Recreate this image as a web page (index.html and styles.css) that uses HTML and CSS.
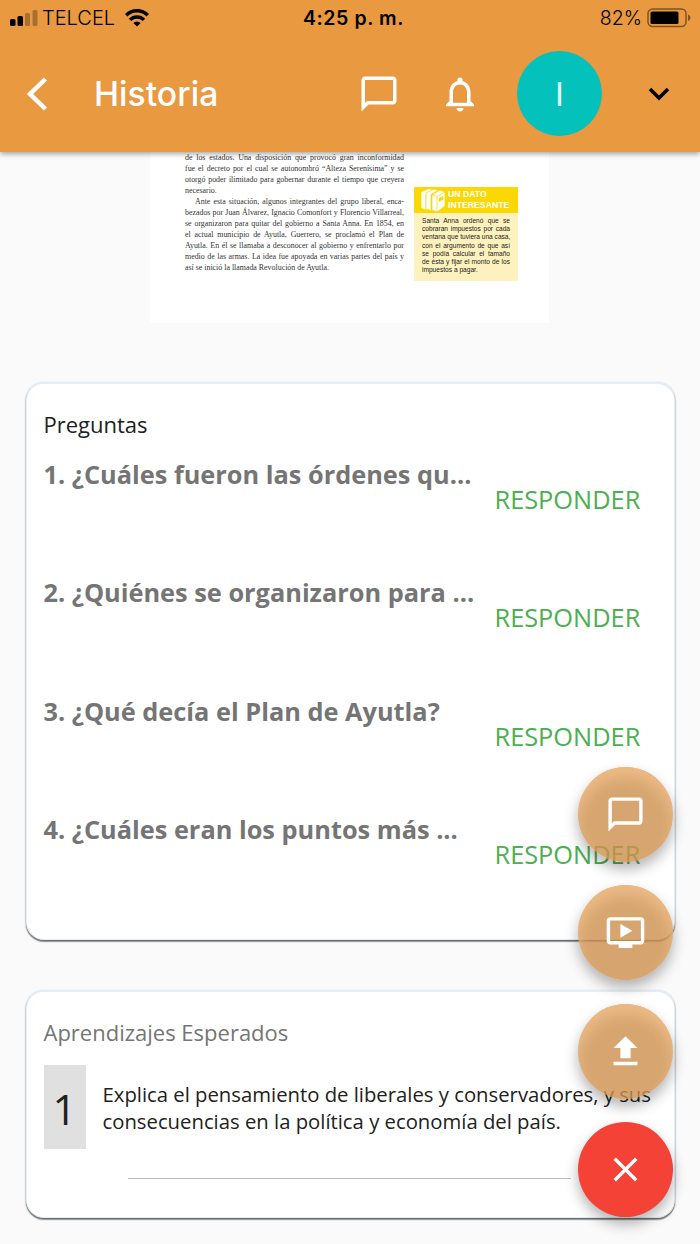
FILE: index.html
```html
<!DOCTYPE html>
<html lang="es">
<head>
    <meta charset="UTF-8">
    <meta name="viewport" content="width=device-width, initial-scale=1.0">
    <title>Historia</title>
    <link rel="stylesheet" href="styles.css">
</head>
<body>
    <header class="header">
        <div class="status-bar">
            <div class="carrier">
                <svg width="28" height="18" viewBox="0 0 28 18">
                    <rect x="0" y="10" width="5.5" height="7" rx="1.5"/>
                    <rect x="7.5" y="7" width="5.5" height="10" rx="1.5"/>
                    <rect x="15" y="4" width="5" height="13" rx="1.5" opacity=".27"/>
                    <rect x="22.5" y="1" width="5" height="16" rx="1.5" opacity=".27"/>
                </svg>
                <span class="carrier-name">TELCEL</span>
                <svg class="wifi" width="24" height="18" viewBox="0 0 24 18" fill="none" stroke="#000" stroke-width="3.4">
                    <path d="M1.2 6.300a15.2 15.2 0 0 1 21.6 0"/>
                    <path d="M5 10.900a9.9 9.9 0 0 1 14 0"/>
                    <path d="M12 17.500L8.300 14a5.300 5.300 0 0 1 7.400 0z" fill="#000" stroke="none"/>
                </svg>
            </div>
            <span class="time">4:25 p. m.</span>
            <div class="battery">
                <span>82%</span>
                <svg width="44" height="20" viewBox="0 0 44 20">
                    <rect x="1" y="1" width="38" height="17.5" rx="4.5" fill="none" stroke="#000" stroke-opacity=".45" stroke-width="1.5"/>
                    <rect x="3.5" y="3.5" width="28" height="12.5" rx="1.5"/>
                    <path d="M41 6.500q2.500 1 2.500 3.300t-2.500 3.300z" opacity=".45"/>
                </svg>
            </div>
        </div>
        <nav class="toolbar">
            <svg class="back" width="22" height="34" viewBox="0 0 22 34" fill="none" stroke="#fff" stroke-width="4.5">
                <path d="M19.500 2L4 17l15.500 15"/>
            </svg>
            <h1>Historia</h1>
            <svg class="chat" width="42" height="42" viewBox="0 0 24 24" fill="#fff">
                <path d="M20 2H4c-1.100 0-2 .9-2 2v18l4-4h14c1.100 0 2-.9 2-2V4c0-1.100-.9-2-2-2zm0 14H5.200L4 17.200V4h16v12z"/>
            </svg>
            <svg class="bell" width="42" height="42" viewBox="0 0 24 24" fill="#fff">
                <path d="M12 22c1.100 0 2-.9 2-2h-4c0 1.100.9 2 2 2zm6-6v-5c0-3.070-1.630-5.640-4.500-6.320V4c0-.83-.67-1.500-1.500-1.500s-1.500.67-1.500 1.500v.68C7.640 5.360 6 7.920 6 11v5l-2 2v1h16v-1l-2-2zm-2 1H8v-6c0-2.480 1.510-4.500 4-4.500s4 2.020 4 4.500v6z"/>
            </svg>
            <div class="avatar">I</div>
            <svg class="more" width="22" height="14" viewBox="0 0 22 14" fill="none" stroke="#000" stroke-width="3.5">
                <path d="M2 2l9 9 9-9"/>
            </svg>
        </nav>
    </header>

    <main>
        <article class="book">
            <div class="book-text">
                <p>de los estados. Una disposición que provocó gran inconformidad</p>
                <p>fue el decreto por el cual se autonombró “Alteza Serenísima” y se</p>
                <p>otorgó poder ilimitado para gobernar durante el tiempo que creyera</p>
                <p class="last">necesario.</p>
                <p class="indent">Ante esta situación, algunos integrantes del grupo liberal, enca-</p>
                <p>bezados por Juan Álvarez, Ignacio Comonfort y Florencio Villarreal,</p>
                <p>se organizaron para quitar del gobierno a Santa Anna. En 1854, en</p>
                <p>el actual municipio de Ayutla, Guerrero, se proclamó el Plan de</p>
                <p>Ayutla. En él se llamaba a desconocer al gobierno y enfrentarlo por</p>
                <p>medio de las armas. La idea fue apoyada en varias partes del país y</p>
                <p class="last">así se inició la llamada Revolución de Ayutla.</p>
            </div>
            <aside class="fact">
                <div class="fact-title">
                    <svg width="24" height="24" viewBox="0 0 24 24" fill="#fff" stroke="#fbd704" stroke-width=".7">
                        <path d="M0 4L8 .5l4 1.500-7 4v16l-5-2z"/>
                        <path d="M5 5l8-4 4 1.500-7 4v16L5 21z"/>
                        <path d="M11 7l8-5 5 2v14l-8 6-5-2z"/>
                        <path d="M11 7l5 1.500L24 4M16 8.500V24" fill="none"/>
                        <path d="M18 10.500l4-2v3l-4 2z" fill="#fbd704"/>
                    </svg>
                    <h2>UN DATO<br>INTERESANTE</h2>
                </div>
                <div class="fact-text">
                    <p>Santa Anna ordenó que se</p>
                    <p>cobraran impuestos por cada</p>
                    <p>ventana que tuviera una casa,</p>
                    <p>con el argumento de que así</p>
                    <p>se podía calcular el tamaño</p>
                    <p>de ésta y fijar el monto de los</p>
                    <p class="last">impuestos a pagar.</p>
                </div>
            </aside>
        </article>

        <section class="card questions">
            <h3>Preguntas</h3>
            <div class="question">
                <b>1. ¿Cuáles fueron las órdenes qu...</b>
                <a class="answer">RESPONDER</a>
            </div>
            <div class="question">
                <b>2. ¿Quiénes se organizaron para ...</b>
                <a class="answer">RESPONDER</a>
            </div>
            <div class="question">
                <b>3. ¿Qué decía el Plan de Ayutla?</b>
                <a class="answer">RESPONDER</a>
            </div>
            <div class="question">
                <b>4. ¿Cuáles eran los puntos más ...</b>
                <a class="answer">RESPONDER</a>
            </div>
        </section>

        <section class="card goals">
            <h3>Aprendizajes Esperados</h3>
            <div class="goal">
                <span class="number">1</span>
                <p>Explica el pensamiento de liberales y conservadores, y sus<br>consecuencias en la política y economía del país.</p>
            </div>
            <hr>
        </section>
    </main>

    <div class="fabs">
        <div class="fab">
            <svg width="41" height="41" viewBox="0 0 24 24" fill="#fff">
                <path d="M20 2H4c-1.100 0-2 .9-2 2v18l4-4h14c1.100 0 2-.9 2-2V4c0-1.100-.9-2-2-2zm0 14H5.200L4 17.200V4h16v12z"/>
            </svg>
        </div>
        <div class="fab">
            <svg width="41" height="41" viewBox="0 0 24 24" fill="#fff">
                <path d="M21 3H3c-1.110 0-2 .89-2 2v12c0 1.100.89 2 2 2h5v2h8v-2h5c1.100 0 1.990-.9 1.990-2L23 5c0-1.110-.9-2-2-2zm0 14H3V5h18v12zm-5-6l-7 4V7z"/>
            </svg>
        </div>
        <div class="fab">
            <svg width="41" height="41" viewBox="0 0 24 24" fill="#fff">
                <path d="M9 16h6v-6h4l-7-7-7 7h4zm-4 2h14v2H5z"/>
            </svg>
        </div>
        <div class="fab close">
            <svg width="41" height="41" viewBox="0 0 24 24" fill="#fff">
                <path d="M19 6.410L17.590 5 12 10.590 6.410 5 5 6.410 10.590 12 5 17.590 6.410 19 12 13.410 17.590 19 19 17.590 13.410 12z"/>
            </svg>
        </div>
    </div>
</body>
</html>
```
FILE: styles.css
```css
* {
    box-sizing: border-box;
}
body {
    margin: 0;
    height: 1244px;
    overflow: hidden;
    background-color: #fafafa;
    font-family: "Open Sans", sans-serif;
    color: #212121;
}
h1, h2, h3, p {
    margin: 0;
    font-weight: normal;
}
svg {
    display: block;
    flex: none;
}

/* header */
.header {
    position: relative;
    z-index: 1;
    height: 152px;
    background-color: #e9993f;
    box-shadow: 0 2px 5px rgba(0, 0, 0, 0.35);
    font-family: Inter, sans-serif;
}
.status-bar {
    display: grid;
    grid-template-columns: 1fr auto 1fr;
    align-items: center;
    height: 36px;
    padding: 0 9px 0 10px;
    color: #000;
    font-size: 19.5px;
}
.carrier, .battery {
    display: flex;
    align-items: center;
}
.carrier-name {
    width: 72px;
    margin-left: 4px;
    font-size: 20px;
    font-weight: 300;
}
.wifi {
    margin-left: 11px;
}
.time {
    padding-left: 6px;
    font-weight: 600;
    letter-spacing: 0.6px;
}
.battery {
    justify-content: flex-end;
    gap: 5px;
    font-weight: 300;
}
.toolbar {
    display: flex;
    align-items: center;
    height: 115px;
    padding: 0 30px 0 26px;
}
.toolbar h1 {
    margin-left: 46px;
    width: 264px;
    color: #fff;
    font-size: 33.7px;
    font-weight: 500;
}
.bell {
    margin-left: 39px;
}
.avatar {
    display: flex;
    align-items: center;
    justify-content: center;
    width: 85px;
    height: 85px;
    margin-left: 36px;
    border-radius: 50%;
    background-color: #05c1bb;
    color: #e0f7fa;
    font-size: 33px;
}
.more {
    margin-left: auto;
}

/* textbook page */
.book {
    display: flex;
    gap: 10px;
    width: 399px;
    height: 171px;
    margin-left: 150px;
    padding-left: 35px;
    background-color: #fff;
}
.book-text {
    width: 219px;
    font-family: "Liberation Serif", serif;
    font-size: 7.9px;
    line-height: 11px;
    color: #333;
}
.book-text p, .fact-text p {
    white-space: nowrap;
    text-align-last: justify;
}
.book-text .last, .fact-text .last {
    text-align-last: left;
}
.book-text .indent {
    padding-left: 10px;
}
.fact {
    width: 104px;
    height: 94px;
    margin-top: 35px;
    background-color: #fdf2bd;
    font-family: "Liberation Sans", sans-serif;
}
.fact-title {
    display: flex;
    align-items: center;
    gap: 3px;
    height: 26px;
    padding-left: 7px;
    background-color: #fbd704;
}
.fact-title h2 {
    color: #fff;
    font-size: 8.7px;
    line-height: 11px;
    font-weight: bold;
}
.fact-text {
    padding: 4px 8px 0;
    font-size: 6.6px;
    line-height: 8.2px;
    color: #222;
}

/* cards */
.card {
    width: 649px;
    margin: 0 auto;
    padding: 0 17px;
    border: 1px solid #e3eef6;
    border-top-width: 2px;
    border-radius: 18px;
    background-color: #fff;
    box-shadow: 0 1px 2px rgba(0, 0, 0, 0.5), 0 2px 1px rgba(0, 0, 0, 0.3);
}
.card h3 {
    font-size: 22px;
    line-height: 30px;
}
.questions {
    height: 558px;
    margin-top: 59px;
    padding-top: 25px;
}
.questions h3 {
    margin-bottom: 1px;
}
.question {
    display: grid;
    grid-template-columns: 451px auto;
    height: 118.33px;
    padding-top: 16px;
    line-height: 36px;
    white-space: nowrap;
}
.question b {
    font-size: 25.35px;
    color: #757575;
}
.answer {
    margin-top: 25px;
    font-size: 25.35px;
    color: #4caf50;
}
.goals {
    height: 228px;
    margin-top: 50px;
    padding-top: 25px;
}
.goals h3 {
    color: #757575;
}
.goal {
    display: flex;
    align-items: center;
    gap: 17px;
    margin-top: 18px;
}
.goal p {
    padding-top: 2px;
    font-size: 20.3px;
    line-height: 27px;
    white-space: nowrap;
}
.number {
    width: 42px;
    height: 84px;
    background-color: #e0e0e0;
    font-size: 42px;
    line-height: 88px;
    text-align: center;
}
.goals hr {
    width: 443px;
    margin: 29px 0 0 84px;
    border: 0;
    border-top: 1px solid #bdbdbd;
}

/* floating buttons */
.fabs {
    position: fixed;
    z-index: 2;
    top: 767px;
    right: 27px;
    display: flex;
    flex-direction: column;
    gap: 23.4px;
}
.fab {
    display: flex;
    align-items: center;
    justify-content: center;
    width: 95px;
    height: 95px;
    border-radius: 50%;
    background-color: rgba(205, 143, 75, 0.8);
    box-shadow: 0 7px 14px rgba(0, 0, 0, 0.3), inset 0 10px 14px rgba(240, 190, 138, 0.9);
}
.close {
    background-color: #f44336;
    box-shadow: 0 7px 14px rgba(0, 0, 0, 0.3);
}
```
